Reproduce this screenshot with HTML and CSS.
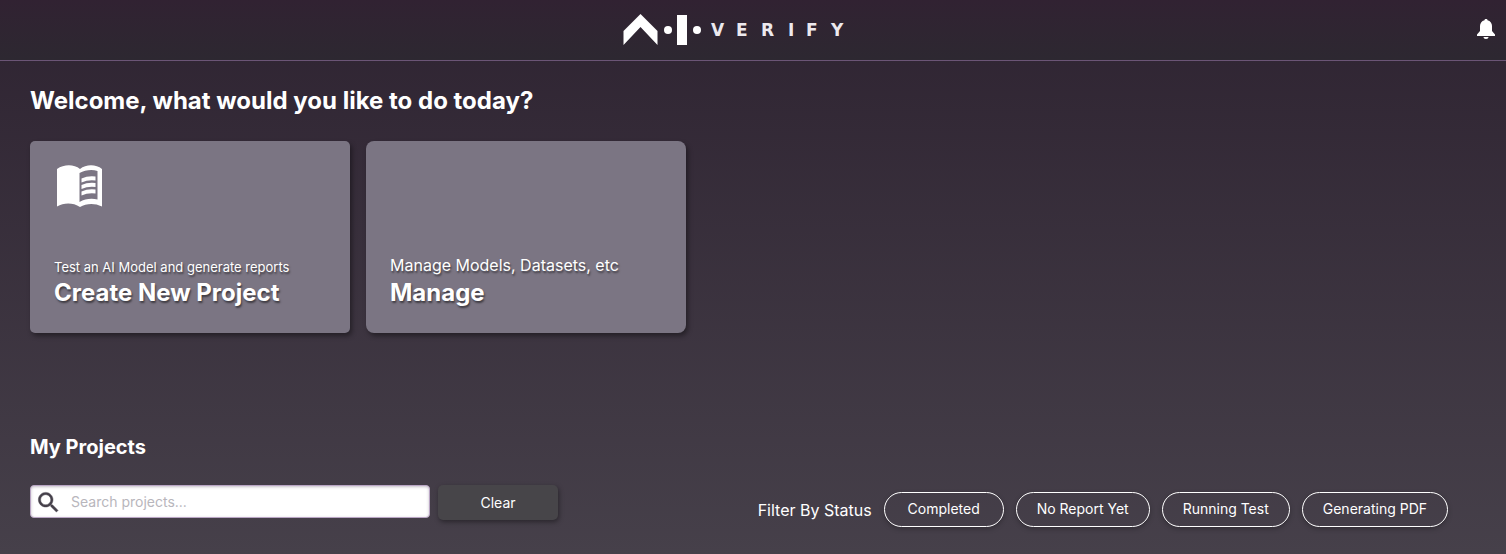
FILE: index.html
```html
<!DOCTYPE html>
<html lang="en">
<head>
<meta charset="utf-8">
<meta name="viewport" content="width=device-width, initial-scale=1">
<title>AI Verify</title>
<link rel="stylesheet" href="styles.css">
</head>
<body>
<header class="header">
  <a class="logo" href="#" aria-label="AI Verify home">
    <svg class="logo-art" viewBox="0 0 224 32">
      <path d="M.5 17 17.500 0 34.500 17v14L17.500 13 .5 31z"/>
      <circle cx="45" cy="16" r="4"/>
      <path d="M54 1h10v30H54z"/>
      <circle cx="74" cy="16" r="4"/>
      <text class="logo-word" x="88 113 138 165 183 208" y="22">VERIFY</text>
    </svg>
  </a>
  <button class="bell" type="button" aria-label="Notifications">
    <svg viewBox="0 0 20 20" aria-hidden="true"><path d="M10 0c-1 0-1.500.6-1.500 1.200C5.500 1.800 4 4.500 4 7v5L1 15.500V17h18v-1.500L16 12V7c0-2.500-1.500-5.200-4.500-5.800C11.500.6 11 0 10 0zM7.500 18h5c0 1.200-1 2-2.500 2s-2.500-.8-2.500-2z"/></svg>
  </button>
</header>
<main class="main">
  <h1 class="title">Welcome, what would you like to do today?</h1>
  <div class="cards">
    <a class="card" href="#">
      <svg class="book" viewBox="0 0 46 43" aria-hidden="true">
        <path fill-rule="evenodd" d="M0 4C7-1 17-1 23 4C29-1 39-1 45 4V41.500C37 37.500 29 38.500 23 42C16 37.500 7 37.500 0 41.500zM22.500 8V37C28 34 34 33 40.500 34.500V6C35 4 28 5 22.500 8z"/>
        <path d="M24.500 13.500Q31 10.500 38.500 11.500V15.500Q31 14.500 24.500 17.500zM24.500 20Q31 17 38.500 18V22Q31 21 24.500 24zM24.500 26.500Q31 23.500 38.500 24.500V28.500Q31 27.500 24.500 30.500z"/>
      </svg>
      <span class="card-text card-text-small">Test an AI Model and generate reports</span>
      <span class="card-title">Create New Project</span>
    </a>
    <a class="card card-round" href="#">
      <span class="card-text">Manage Models, Datasets, etc</span>
      <span class="card-title">Manage</span>
    </a>
  </div>
  <section class="projects">
    <h2 class="subtitle">My Projects</h2>
    <div class="toolbar">
      <form class="search">
        <label class="search-box">
          <svg class="search-icon" viewBox="0 0 24 24" aria-hidden="true"><path d="M15.500 14h-.79l-.28-.27C15.410 12.590 16 11.110 16 9.500 16 5.910 13.090 3 9.500 3S3 5.910 3 9.500 5.910 16 9.500 16c1.610 0 3.090-.59 4.230-1.570l.27.28v.79l5 4.990L20.490 19l-4.990-5zm-6 0C7.010 14 5 11.990 5 9.500S7.010 5 9.500 5 14 7.010 14 9.500 11.990 14 9.500 14z"/></svg>
          <input class="search-input" type="text" placeholder="Search projects..." aria-label="Search projects">
        </label>
        <button class="clear" type="reset">Clear</button>
      </form>
      <div class="filters" role="group" aria-labelledby="filter-label">
        <span class="filter-label" id="filter-label">Filter By Status</span>
        <button class="pill" type="button">Completed</button>
        <button class="pill" type="button">No Report Yet</button>
        <button class="pill" type="button">Running Test</button>
        <button class="pill" type="button">Generating PDF</button>
      </div>
    </div>
  </section>
</main>
</body>
</html>
```
FILE: styles.css
```css
* { box-sizing: border-box; }
body {
  margin: 0;
  min-height: 100vh;
  font-family: Inter, "Liberation Sans", sans-serif;
  color: #fff;
  background: linear-gradient(#2e2331, #46404a) no-repeat #46404a;
}
button, input { font: inherit; color: inherit; }
.header {
  display: grid;
  grid-template-columns: 1fr 36px;
  align-items: center;
  height: 61px;
  border-bottom: 1px solid #6b5576;
  background: linear-gradient(#312232, #2d2831);
}
.logo { justify-self: center; display: flex; }
.logo-art { width: 224px; height: 32px; fill: #fff; }
.logo-word {
  font: bold 17px "DejaVu Sans", sans-serif;
  fill: #ece9ee;
}
.bell {
  display: flex;
  padding: 0 6px 2px;
  border: 0;
  background: none;
}
.bell svg { width: 20px; height: 20px; fill: #fff; }
.main { padding: 24px 58px 27px 30px; }
.title {
  margin: 0;
  font-size: 24px;
  line-height: 32px;
}
.cards { display: flex; flex-wrap: wrap; gap: 16px; margin-top: 24px; }
.card {
  display: flex;
  flex-direction: column;
  justify-content: flex-end;
  width: 320px;
  min-height: 192px;
  padding: 24px;
  border-radius: 5px;
  background: #7b7583;
  box-shadow: 2px 3px 5px rgba(0, 0, 0, .4);
  color: #fff;
  text-decoration: none;
  text-shadow: 1px 2px 2px rgba(0, 0, 0, .5);
}
.card-round { border-radius: 8px; }
.book { width: 46px; height: 43px; margin: 0 auto auto 3px; fill: #fff; }
.card-text { font-size: 16px; line-height: 24px; }
.card-text-small { font-size: 13px; line-height: 20px; }
.card-title { font-size: 24px; font-weight: 700; line-height: 32px; }
.projects { margin-top: 98px; }
.subtitle { margin: 0; font-size: 20px; line-height: 32px; }
.toolbar {
  display: flex;
  flex-wrap: wrap;
  justify-content: space-between;
  gap: 8px;
  margin-top: 22px;
}
.search { display: flex; align-items: flex-start; gap: 8px; }
.search-box {
  display: flex;
  align-items: center;
  gap: 9px;
  width: 400px;
  height: 33px;
  padding: 2px 4px 0;
  border: 1px solid #b9a5c4;
  border-radius: 4px;
  background: #fff;
  box-shadow: inset 0 1px 3px rgba(60, 40, 70, .3);
}
.search-icon { flex: none; width: 27px; height: 27px; fill: #45404a; stroke: #45404a; stroke-width: .4; }
.search-input {
  flex: 1;
  min-width: 0;
  padding: 0 0 2px;
  border: 0;
  outline: 0;
  background: none;
  color: #333;
  font-size: 14px;
}
.search-input::placeholder { color: #b8b6bc; }
.clear {
  width: 120px;
  height: 35px;
  border: 0;
  border-radius: 5px;
  background: #474549;
  box-shadow: 1px 2px 5px rgba(0, 0, 0, .4);
  font-size: 14px;
}
.filters { display: flex; flex-wrap: wrap; align-items: center; gap: 12px; padding-top: 7px; }
.filter-label { font-size: 16px; }
.pill {
  min-width: 120px;
  height: 35px;
  padding: 0 20px 2px;
  border: 1px solid #fff;
  border-radius: 18px;
  background: none;
  box-shadow: 0 2px 5px rgba(0, 0, 0, .25);
  font-size: 14px;
}
```
